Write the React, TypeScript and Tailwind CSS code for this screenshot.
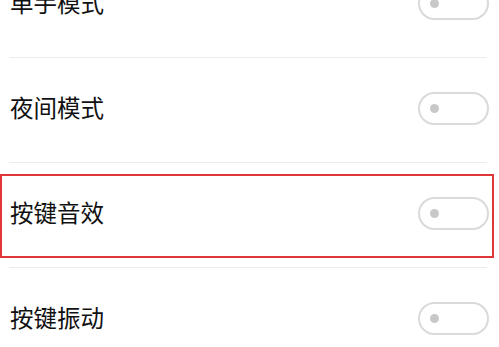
import React from 'react';

type Row = { label: string; marked?: boolean };

const rows: Row[] = [
  { label: '单手模式' },
  { label: '夜间模式' },
  { label: '按键音效', marked: true },
  { label: '按键振动' },
];

function Toggle() {
  return (
    <div className="flex h-[33px] w-[71px] items-center rounded-full border-2 border-[#dadada] bg-white pl-[10px]">
      <span className="h-[9px] w-[9px] rounded-full bg-[#c8c8c8]" />
    </div>
  );
}

export default function App() {
  return (
    <div
      className="h-[347px] w-[499px] overflow-hidden bg-white"
      style={{ fontFamily: '"Noto Sans CJK SC", "Noto Sans", sans-serif' }}
    >
      <div className="-mt-[47px]">
        {rows.map((row, i) => (
          <div key={row.label}>
            <div className="relative flex h-[104px] items-center justify-between pb-[4px] pl-[10px] pr-[10px]">
              <span className="text-[23.5px] leading-none text-[#111111]">{row.label}</span>
              <Toggle />
              {row.marked && (
                <div className="pointer-events-none absolute left-0 right-[5px] top-[11px] bottom-[9px] border-[2.5px] border-[#e23636]" />
              )}
            </div>
            {i < rows.length - 1 && <div className="ml-[9px] mr-[12px] h-px bg-[#ebebeb]" />}
          </div>
        ))}
      </div>
    </div>
  );
}
